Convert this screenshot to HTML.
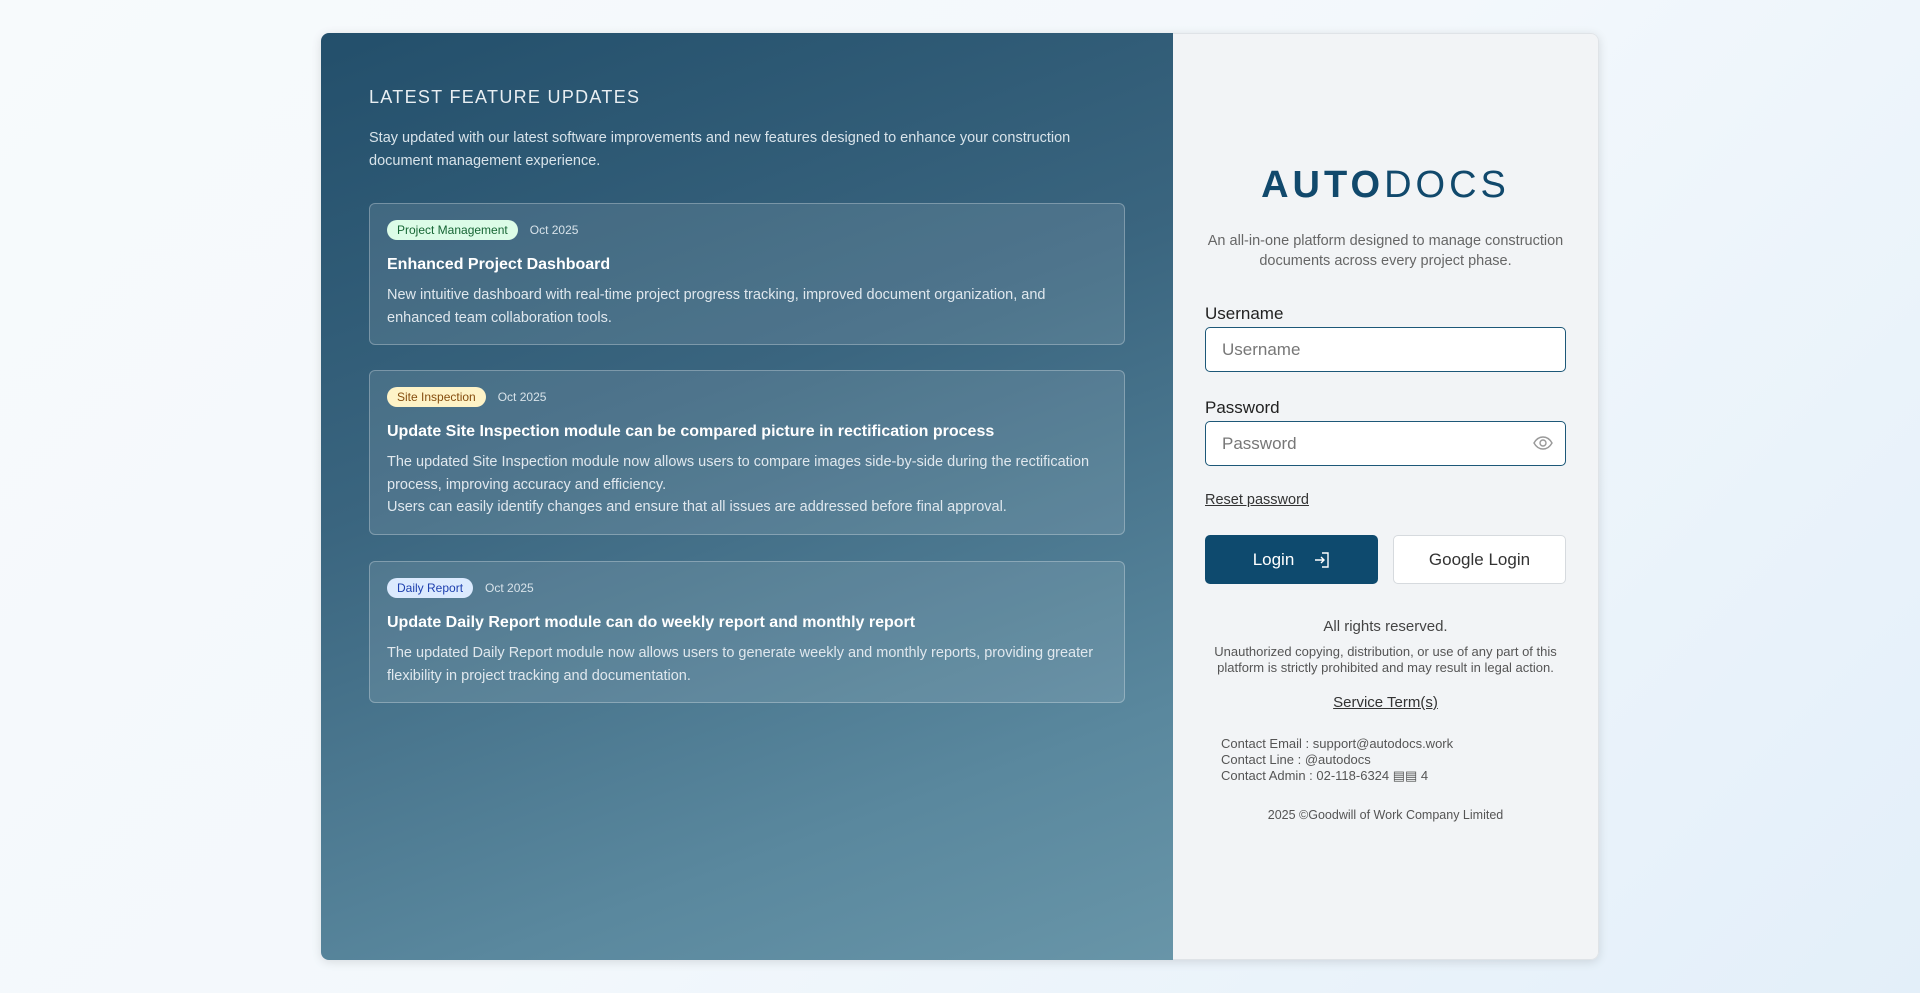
<!DOCTYPE html>
<html><head><meta charset="utf-8"><style>
*{box-sizing:border-box;margin:0;padding:0}
body{width:1920px;height:993px;overflow:hidden;font-family:"Liberation Sans",sans-serif;background:linear-gradient(135deg,#f7fafc 0%,#f3f8fc 50%,#e3eff9 100%);position:relative}
.card{position:absolute;left:321px;top:33px;width:1278px;height:927px;border-radius:8px;overflow:hidden;box-shadow:0 2px 10px rgba(0,0,0,.12);display:flex}
.left{width:852px;height:100%;background:linear-gradient(160deg,#234f6b 0%,#3a657f 40%,#5a889e 80%,#6895a8 100%);position:relative;color:#fff}
.right{flex:1;background:#f2f4f6;position:relative;border:1px solid #dfe3e7;border-left:none;border-radius:0 8px 8px 0}
.h{position:absolute;left:48px;top:54px;font-size:18px;letter-spacing:1.3px;color:#e8eef2}
.d{position:absolute;left:48px;top:94px;width:740px;font-size:14.5px;line-height:23px;color:#d8e3ea}
.f{position:absolute;left:48px;width:756px;border:1px solid rgba(255,255,255,.28);background:rgba(255,255,255,.1);border-radius:6px;padding:16px 17px}
.row{display:flex;align-items:center;gap:12px;height:20px}
.b{font-size:12px;padding:0 10px;height:20px;line-height:20px;border-radius:10px}
.dt{font-size:12px;color:#d8e3ea}
.t{font-size:16px;font-weight:bold;margin-top:16px;color:#fff}
.p{font-size:14.5px;line-height:22.5px;margin-top:10px;color:#e0e8ee}
.logo{position:absolute;left:0;right:0;top:130px;text-align:center;font-size:38px;color:#11496c;letter-spacing:4px}
.c{text-align:center;position:absolute;left:0;right:0}
.lab{position:absolute;left:32px;font-size:17px;color:#222}
.in{position:absolute;left:32px;width:361px;height:45px;border:1.5px solid #1d5878;border-radius:5px;background:#fff;font-size:17px;color:#777;padding:12px 16px}
.btn{position:absolute;top:501px;height:49px;border-radius:5px;font-size:17px;display:flex;align-items:center;justify-content:center}
</style></head><body>
<div class="card">
<div class="left">
<div class="h">LATEST FEATURE UPDATES</div>
<div class="d">Stay updated with our latest software improvements and new features designed to enhance your construction document management experience.</div>
<div class="f" style="top:170px;height:142px">
<div class="row"><span class="b" style="background:#dcfce7;color:#166534">Project Management</span><span class="dt">Oct 2025</span></div>
<div class="t">Enhanced Project Dashboard</div>
<div class="p">New intuitive dashboard with real-time project progress tracking, improved document organization, and enhanced team collaboration tools.</div>
</div>
<div class="f" style="top:337px;height:165px">
<div class="row"><span class="b" style="background:#fef3c7;color:#854d0e">Site Inspection</span><span class="dt">Oct 2025</span></div>
<div class="t">Update Site Inspection module can be compared picture in rectification process</div>
<div class="p">The updated Site Inspection module now allows users to compare images side-by-side during the rectification process, improving accuracy and efficiency.<br>Users can easily identify changes and ensure that all issues are addressed before final approval.</div>
</div>
<div class="f" style="top:528px;height:142px">
<div class="row"><span class="b" style="background:#dbeafe;color:#1e40af">Daily Report</span><span class="dt">Oct 2025</span></div>
<div class="t">Update Daily Report module can do weekly report and monthly report</div>
<div class="p">The updated Daily Report module now allows users to generate weekly and monthly reports, providing greater flexibility in project tracking and documentation.</div>
</div>
</div>
<div class="right">
<div class="logo"><b>AUTO</b>DOCS</div>
<div class="c" style="top:197px;font-size:14.5px;line-height:20px;color:#666;padding:0 30px">An all-in-one platform designed to manage construction<br>documents across every project phase.</div>
<div class="lab" style="top:270px">Username</div>
<div class="in" style="top:293px">Username</div>
<div class="lab" style="top:364px">Password</div>
<div class="in" style="top:387px">Password
<svg style="position:absolute;right:12px;top:13px" width="20" height="16" viewBox="0 0 20 16" fill="none" stroke="#999" stroke-width="1.4"><path d="M1 8C3.5 3.5 6.5 2 10 2s6.5 1.5 9 6c-2.5 4.5-5.5 6-9 6S3.5 12.5 1 8z"/><circle cx="10" cy="8" r="3"/></svg></div>
<div style="position:absolute;left:32px;top:458px;font-size:14.5px;color:#333;text-decoration:underline">Reset password</div>
<div class="btn" style="left:32px;width:173px;background:#0e4a6e;color:#fff">Login<svg style="margin-left:20px" width="16" height="18" viewBox="0 0 16 18" fill="none" stroke="#fff" stroke-width="1.4"><path d="M8 2h6v14H8M1 9h9M7 6l3 3-3 3"/></svg></div>
<div class="btn" style="left:220px;width:173px;background:#fff;border:1px solid #d6dade;color:#333">Google Login</div>
<div class="c" style="top:584px;font-size:15px;color:#444">All rights reserved.</div>
<div class="c" style="top:610px;font-size:13px;line-height:16px;color:#555">Unauthorized copying, distribution, or use of any part of this<br>platform is strictly prohibited and may result in legal action.</div>
<div class="c" style="top:660px;font-size:15px;color:#333;text-decoration:underline">Service Term(s)</div>
<div style="position:absolute;left:48px;top:702px;font-size:13px;line-height:16px;color:#555">Contact Email : support@autodocs.work<br>Contact Line : @autodocs<br>Contact Admin : 02-118-6324 ▤▤ 4</div>
<div class="c" style="top:774px;font-size:12.5px;color:#555">2025 ©Goodwill of Work Company Limited</div>
</div>
</div>
</body></html>
